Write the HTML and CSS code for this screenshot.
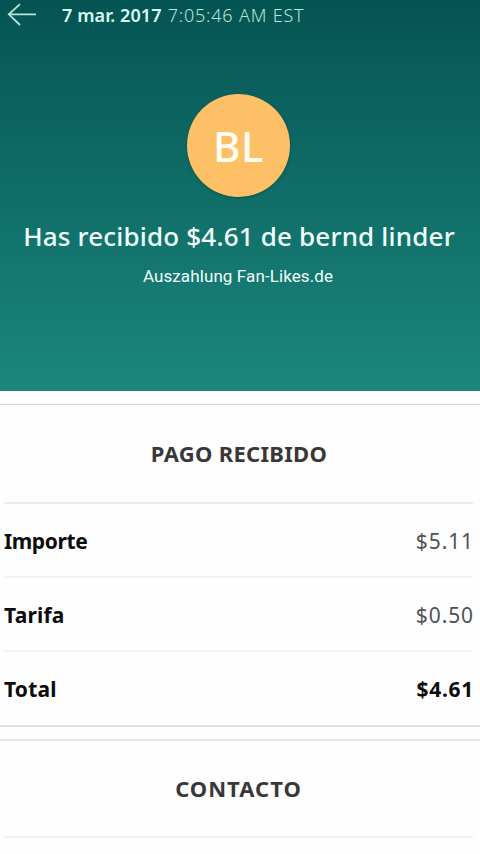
FILE: index.html
```html
<!DOCTYPE html>
<html lang="es">
<head>
<meta charset="utf-8">
<meta name="viewport" content="width=device-width, initial-scale=1">
<title>Pago recibido</title>
<link rel="stylesheet" href="styles.css">
</head>
<body>
<header class="hero">
  <div class="topbar">
    <svg class="back" viewBox="0 0 30 24" aria-hidden="true"><path d="M29 11.300H2M13 1.200L1.800 11.300L13 22"/></svg>
    <p class="stamp"><span class="date">7 mar. 2017</span><span class="time">7:05:46 AM EST</span></p>
  </div>
  <div class="avatar"><span>BL</span></div>
  <h1 class="title">Has recibido $4.61 de bernd linder</h1>
  <p class="note">Auszahlung Fan-Likes.de</p>
</header>
<main>
  <section class="card payment">
    <h2 class="heading">PAGO RECIBIDO</h2>
    <dl class="rows">
      <div class="row first"><dt class="importe">Importe</dt><dd>$5.11</dd></div>
      <div class="row"><dt>Tarifa</dt><dd>$0.50</dd></div>
      <div class="row total"><dt>Total</dt><dd>$4.61</dd></div>
    </dl>
  </section>
  <section class="card contact">
    <h2 class="heading">CONTACTO</h2>
    <div class="rule"></div>
  </section>
</main>
</body>
</html>
```
FILE: styles.css
```css
* { box-sizing: border-box; }
html, body, h1, h2, p, dl, dt, dd { margin: 0; padding: 0; }
body {
  width: 480px;
  height: 854px;
  overflow: hidden;
  background: #fefefe;
  font-family: "Noto Sans", "Open Sans", sans-serif;
}
.hero {
  height: 391px;
  display: flex;
  flex-direction: column;
  align-items: center;
  background: linear-gradient(#045353 0, #0a5f5c 80px, #11706a 215px, #1c877d 391px);
  color: #f2fffc;
}
.topbar {
  width: 100%;
  height: 32px;
  display: flex;
  align-items: center;
  padding: 0 0 3px 7px;
}
.back {
  width: 30px;
  height: 24px;
  fill: none;
  stroke: #b5e5dc;
  stroke-width: 1.8;
}
.stamp {
  display: flex;
  gap: 6px;
  margin-left: 25px;
  line-height: 24px;
  white-space: nowrap;
}
.date { font-size: 18px; font-weight: 600; letter-spacing: .1px; color: #d8fcf3; }
.time { font-size: 18px; font-weight: 300; letter-spacing: .8px; color: #b5e6dc; }
.avatar {
  width: 103px;
  height: 103px;
  margin: 62px 3px 0 0;
  display: flex;
  justify-content: center;
  align-items: center;
  border-radius: 50%;
  background: #fec067;
  box-shadow: 0 1px 3px rgba(0, 65, 50, .55);
  color: #fffdf4;
  font-size: 42px;
  font-weight: 500;
  letter-spacing: .5px;
  line-height: 50px;
}
.title {
  margin: 20px 2px 0 0;
  font-size: 26px;
  font-weight: 500;
  letter-spacing: .18px;
  line-height: 38px;
  white-space: nowrap;
}
.note {
  margin: 9px 4px 0 0;
  font-family: Roboto, sans-serif;
  font-size: 17px;
  letter-spacing: .1px;
  line-height: 25px;
}
.card { border-top: 1px solid #d3d3d3; }
.payment {
  height: 323px;
  margin-top: 13px;
  border-bottom: 2px solid #dedede;
}
.contact { margin-top: 12px; border-top: 2px solid #e6e6e6; }
.heading {
  height: 97px;
  padding-right: 2px;
  color: #383838;
  font-size: 22px;
  font-weight: 700;
  letter-spacing: .3px;
  line-height: 97px;
  text-align: center;
}
.contact .heading {
  height: 95px;
  padding-right: 3px;
  letter-spacing: 1px;
  line-height: 95px;
}
.rows { margin: 0 7px 0 4px; }
.row {
  height: 74px;
  padding-top: 2px;
  border-top: 2px solid #f4f4f4;
  display: flex;
  justify-content: space-between;
  align-items: center;
  font-size: 21px;
  line-height: 30px;
}
.row.first { border-top-color: #ebebeb; }
.row dt { color: #0c0c0c; font-weight: 700; letter-spacing: .2px; }
.row dt.importe { letter-spacing: -.4px; }
.row dd { margin-right: -1px; color: #515151; font-size: 21px; letter-spacing: .9px; }
.row.total dd { color: #0c0c0c; font-weight: 700; letter-spacing: .7px; }
.rule { height: 2px; margin: 0 7px 0 4px; background: #f1f1f1; }
```
